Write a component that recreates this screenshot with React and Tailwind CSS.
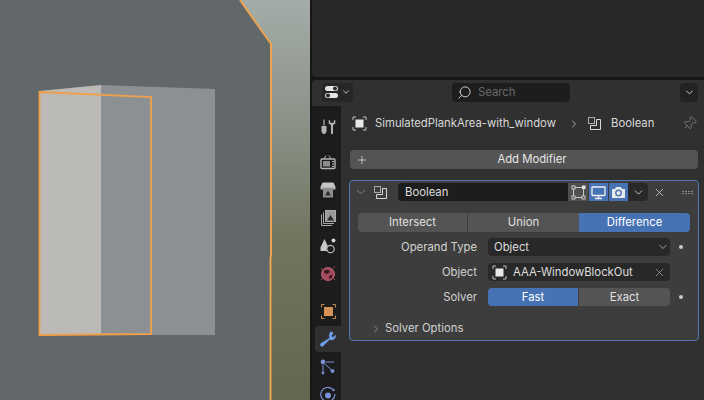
import React from "react";
import { ChevronDown, ChevronRight, Pin, Search, X, Plus } from "lucide-react";

const ObjectIcon = ({ fill = "#e8e8e8", line = "#c4c4c4" }) => (
  <svg width="15" height="15" viewBox="0 0 15 15" fill="none">
    <path d="M1 4V1H4M11 1H14V4M14 11V14H11M4 14H1V11" stroke={line} strokeWidth="1" />
    <rect x="3.5" y="3.5" width="8" height="8" fill={fill} />
  </svg>
);

const ModifierIcon = () => (
  <svg width="15" height="15" viewBox="0 0 15 15" fill="none" stroke="#d8d8d8" strokeWidth="1">
    <rect x="1.5" y="1.5" width="6" height="6" stroke="#aaaaaa" />
    <path d="M9.5 3.5H13.5V13.5H3.5V9.5H9.5Z" />
  </svg>
);

const EditorIcon = () => (
  <svg width="16" height="14" viewBox="0 0 16 14">
    <rect x="1" y="1" width="13" height="5" rx="2.5" fill="#e4e4e4" />
    <circle cx="11" cy="3.5" r="2" fill="#2b2b2b" />
    <rect x="1" y="8" width="13" height="5" rx="2.5" fill="#e4e4e4" />
    <circle cx="4" cy="10.5" r="2" fill="#2b2b2b" />
  </svg>
);

const ToolIcon = () => (
  <svg width="16" height="16" viewBox="0 0 16 16" fill="#b4b4b4">
    <rect x="3.4" y="0.5" width="1.2" height="6" />
    <path d="M1.5 7H6.5V12.5L5 15H3L1.5 12.5Z" />
    <path d="M8.7 1V4.5L11 6V14.2A1 1 0 0 0 13 14.2V6L15.3 4.5V1L13.8 1.6V3.8H10.2V1.6Z" />
  </svg>
);

const RenderIcon = () => (
  <svg width="16" height="16" viewBox="0 0 16 16" fill="none" stroke="#b4b4b4" strokeWidth="1.4">
    <rect x="1" y="5" width="14" height="9.5" rx="1" />
    <path d="M4 5L6 1.5M11 5L9 1.5" strokeWidth="1" />
    <rect x="3" y="7" width="7" height="5.5" fill="#8c8c8c" stroke="none" />
    <path d="M12 7.5H14M12 10H14M12 12.5H14" strokeWidth="1" />
  </svg>
);

const OutputIcon = () => (
  <svg width="16" height="16" viewBox="0 0 16 16">
    <path d="M2.5 0.5H13.5L15.5 5H0.5Z" fill="#c4c4c4" />
    <rect x="0.5" y="5" width="15" height="2.5" fill="#b4b4b4" />
    <rect x="3" y="6" width="10" height="9.5" fill="#8e8e8e" />
    <path d="M5 13.5L8 8.5L11 13.5Z" fill="#303030" />
  </svg>
);

const ViewLayerIcon = () => (
  <svg width="16" height="16" viewBox="0 0 16 16" fill="none" stroke="#a8a8a8">
    <path d="M1.5 4.5V15.5H12" />
    <path d="M3.5 2.5V13.5H14" />
    <rect x="5.5" y="0.5" width="10" height="11" fill="#9a9a9a" />
    <path d="M7 10.5L10.5 5L14 10.5Z" fill="#2a2a2a" stroke="none" />
  </svg>
);

const SceneIcon = () => (
  <svg width="16" height="16" viewBox="0 0 16 16">
    <path d="M4.5 1L8.5 9.5V13H0.5V9.5Z" fill="#c8c8c8" />
    <circle cx="13.5" cy="2.5" r="2" fill="#d4d4d4" />
    <circle cx="10.5" cy="11" r="3.7" fill="#1c1c1c" stroke="#b8b8b8" strokeWidth="1.2" />
  </svg>
);

const WorldIcon = () => (
  <svg width="18" height="18" viewBox="0 0 18 18">
    <circle cx="9" cy="9" r="6.5" fill="#a34a5c" stroke="#b85e72" />
    <path d="M5 5.5L9 4.5L11 7L8 9L5.5 8ZM10 11L13.5 9.5L12.5 13.5L10.5 14Z" fill="#331a20" />
    <path d="M2 3L4 5M14 13L16 15M14 3.5L16 1.5M2 15L4 13" stroke="#9c4a5a" strokeWidth="1" />
  </svg>
);

const ObjectTabIcon = () => (
  <svg width="15" height="15" viewBox="0 0 15 15" fill="none">
    <path d="M0.5 3.5V0.5H3.5M11.5 0.5H14.5V3.5M14.5 11.5V14.5H11.5M3.5 14.5H0.5V11.5" stroke="#c28a52" />
    <rect x="3" y="3" width="9" height="9" fill="#d39253" />
  </svg>
);

const WrenchIcon = () => (
  <svg width="16" height="16" viewBox="0 0 16 16" fill="#6d9fea">
    <path d="M10.5 0.5L9.5 2.5C8.7 4.3 9 6 9.5 7L0.8 12.3C-0.2 13 0 14.2 0.7 15C1.4 15.8 2.6 15.9 3.3 15.1L9.5 8.8C11.5 9.6 14 9 15.2 7C15.8 6 16 4.8 15.8 3.8L13.5 5.8C12.6 6.2 11.6 5.5 11.8 4.4L13.6 1.9C12.6 1.1 11.5 0.7 10.5 0.5Z" />
  </svg>
);

const ParticlesIcon = () => (
  <svg width="16" height="16" viewBox="0 0 16 16" fill="#7b8fd8" stroke="#7b8fd8">
    <circle cx="3" cy="3" r="2.4" stroke="none" />
    <circle cx="12.5" cy="12" r="2" stroke="none" />
    <circle cx="3" cy="14" r="1.4" stroke="none" />
    <path d="M6 3H14M3 6V12.5M5 5L11 10.5" fill="none" strokeWidth="1" />
  </svg>
);

const PhysicsIcon = () => (
  <svg width="18" height="18" viewBox="0 0 18 18" fill="none" stroke="#7b8fd8" strokeWidth="1.2">
    <path d="M13.5 3.2A7 7 0 1 0 15.8 8" />
    <circle cx="9" cy="9.5" r="3" fill="#7b8fd8" stroke="none" />
    <circle cx="14.5" cy="4" r="1.2" fill="#7b8fd8" stroke="none" />
  </svg>
);

const EditModeIcon = () => (
  <svg width="15" height="15" viewBox="0 0 15 15" fill="none" stroke="#c8c8c8">
    <path d="M3 2.5H11M2.5 3V12M12.5 4V12M3 12.5H12" />
    <rect x="1" y="1" width="3" height="3" fill="#4f4f4f" />
    <rect x="11" y="0.5" width="3.5" height="3.5" fill="#e4e4e4" stroke="none" />
    <rect x="1" y="11" width="3" height="3" fill="#4f4f4f" />
    <rect x="11" y="11" width="3" height="3" fill="#4f4f4f" />
  </svg>
);

const MonitorIcon = () => (
  <svg width="15" height="15" viewBox="0 0 15 15" fill="none" stroke="#f0f0f0" strokeWidth="1.3">
    <rect x="1" y="2" width="13" height="8.5" rx="0.5" />
    <path d="M7.5 10.5V13M4 13.5H11" />
  </svg>
);

const CameraIcon = () => (
  <svg width="15" height="15" viewBox="0 0 15 15" fill="none">
    <path d="M1 4H4L5 2H10L11 4H14V13H1Z" fill="#e8e8e8" />
    <circle cx="7.5" cy="8" r="3.4" fill="#4772b3" />
    <circle cx="7.5" cy="8" r="2" fill="#e8e8e8" />
  </svg>
);

const Grip = () => (
  <div className="grid grid-cols-4 gap-[1px]">
    {Array.from({ length: 8 }).map((_, i) => (
      <span key={i} className="w-[2px] h-[1px] bg-[#8a8a8a]" />
    ))}
  </div>
);

const Tab = ({ children, active, className = "" }) => (
  <div className={`h-[28px] w-[26px] shrink-0 flex items-center ${className}`}>
    <div
      className={`h-[26px] w-[26px] flex items-center justify-center ${
        active ? "rounded-l-[4px] bg-[#303030]" : ""
      }`}
    >
      {children}
    </div>
  </div>
);

const PropRow = ({ label, children, dot }) => (
  <div className="flex items-center h-[18px]">
    <span className="w-[130px] pr-[11px] pt-[2px] text-right text-[#d2d2d2]">{label}</span>
    <div className="w-[182px]">{children}</div>
    {dot && <span className="ml-[9px] w-[4px] h-[4px] rounded-full bg-[#c8c8c8]" />}
  </div>
);

// 3D viewport is a drawing, not layout
const Viewport = () => (
  <svg width="310" height="400" viewBox="0 0 310 400" className="shrink-0 block">
    <defs>
      <linearGradient id="sky" x1="0" y1="0" x2="0" y2="1">
        <stop offset="0" stopColor="#a3aca8" />
        <stop offset="0.3" stopColor="#8c9288" />
        <stop offset="0.6" stopColor="#70755f" />
        <stop offset="1" stopColor="#636650" />
      </linearGradient>
    </defs>
    <rect width="310" height="400" fill="url(#sky)" />
    <path d="M0 0H240L271 44V400H0Z" fill="#62676a" />
    <path d="M101 85L215 89V335H101Z" fill="#8c9092" />
    <path d="M39 91L101 85V335H39Z" fill="#bcbab6" />
    <path d="M240 0L271 44V255L270.5 258V400" fill="none" stroke="#eca44e" strokeWidth="2" />
    <path d="M39.5 92L151 97V334L39.5 335Z" fill="none" stroke="#f0a04a" strokeWidth="1.8" />
  </svg>
);

export default function App() {
  return (
    <div
      className="w-[704px] h-[400px] flex overflow-hidden bg-[#161616] text-[11.3px] leading-none text-[#d2d2d2]"
      style={{ fontFamily: "Inter, sans-serif" }}
    >
      <Viewport />
      <div className="flex-1 min-w-0 flex flex-col pl-[2px]">
        {/* Outliner stub */}
        <div className="h-[77px] bg-[#282828] rounded-bl-[4px] shrink-0" />

        {/* Properties editor */}
        <div className="mt-[3px] flex-1 min-h-0 flex flex-col rounded-tl-[4px] overflow-hidden">
          <div className="h-[26px] shrink-0 bg-[#303030] flex items-center pl-[10px] pr-[6px] pb-[2px]">
            <div className="w-[31px] h-[19px] rounded-[4px] bg-[#262626] flex items-center justify-center gap-[1px]">
              <EditorIcon />
              <ChevronDown size={10} strokeWidth={2} className="text-[#d8d8d8]" />
            </div>
            <div className="ml-[99px] w-[118px] h-[19px] rounded-[4px] bg-[#1d1d1d] flex items-center pl-[5px] gap-[6px] text-[#6a6a6a]">
              <Search size={15} strokeWidth={1.5} className="text-[#d8d8d8] -scale-x-100" />
              <span className="pt-[2px]">Search</span>
            </div>
            <div className="ml-auto w-[18px] h-[19px] rounded-[4px] bg-[#232323] flex items-center justify-center">
              <ChevronDown size={11} strokeWidth={2} className="text-[#d8d8d8]" />
            </div>
          </div>

          <div className="flex-1 min-h-0 flex">
            {/* Tab column */}
            <div className="w-[29px] shrink-0 bg-[#1c1c1c] flex flex-col pt-[7px] pl-[3px] text-[#b4b4b4]">
              <Tab className="mb-[7px]"><ToolIcon /></Tab>
              <Tab><RenderIcon /></Tab>
              <Tab><OutputIcon /></Tab>
              <Tab><ViewLayerIcon /></Tab>
              <Tab><SceneIcon /></Tab>
              <Tab className="mb-[9px]"><WorldIcon /></Tab>
              <Tab><ObjectTabIcon /></Tab>
              <Tab active><WrenchIcon /></Tab>
              <Tab><ParticlesIcon /></Tab>
              <Tab><PhysicsIcon /></Tab>
            </div>

            {/* Main content */}
            <div className="flex-1 min-w-0 bg-[#303030] pl-[8px] pr-[5px]">
              <div className="h-[17px] mt-[9px] flex items-center text-[#d8d8d8]">
                <span className="ml-[3px] w-[23px]"><ObjectIcon /></span>
                <span className="w-[193px] whitespace-nowrap">SimulatedPlankArea-with_window</span>
                <ChevronRight size={12} strokeWidth={1.6} className="text-[#c8c8c8]" />
                <span className="ml-[7px] w-[24px]"><ModifierIcon /></span>
                <span>Boolean</span>
                <Pin size={15} strokeWidth={1.2} className="ml-auto mr-[2px] rotate-45 text-[#8c8c8c]" />
              </div>

              <div className="mt-[18px] mx-[1px] h-[19px] rounded-[4px] bg-[#545454] flex items-center px-[6px] text-[#e6e6e6]">
                <Plus size={12} strokeWidth={1.5} />
                <span className="flex-1 text-center pl-[4px]">Add Modifier</span>
              </div>

              {/* Modifier panel */}
              <div className="mt-[11px] h-[161px] rounded-[4px] border border-[#4f78b4] bg-[#3d3d3d] pt-[2px] px-[8px]">
                <div className="h-[18px] flex items-center">
                  <ChevronDown size={14} strokeWidth={1.5} className="ml-[-4px] text-[#8e8e8e]" />
                  <span className="ml-[5px] w-[15px]"><ModifierIcon /></span>
                  <div className="ml-[10px] w-[170px] h-[18px] pt-[2px] rounded-l-[4px] bg-[#1d1d1d] flex items-center pl-[7px] text-[#dedede]">Boolean</div>
                  <div className="w-[20px] h-[18px] bg-[#4f4f4f] flex items-center justify-center"><EditModeIcon /></div>
                  <div className="ml-[1px] w-[19px] h-[18px] bg-[#4772b3] flex items-center justify-center"><MonitorIcon /></div>
                  <div className="ml-[1px] w-[19px] h-[18px] bg-[#4772b3] flex items-center justify-center"><CameraIcon /></div>
                  <div className="w-[20px] h-[18px] rounded-r-[4px] bg-[#282828] flex items-center justify-center">
                    <ChevronDown size={13} strokeWidth={1.6} className="text-[#d8d8d8]" />
                  </div>
                  <X size={13} strokeWidth={1.4} className="ml-[5px] text-[#d8d8d8]" />
                  <div className="ml-auto mr-[-3px]"><Grip /></div>
                </div>

                <div className="mt-[12px] h-[19px] flex text-center leading-[19px]">
                  <div className="w-[109px] rounded-l-[4px] bg-[#545454] text-[#e0e0e0]">Intersect</div>
                  <div className="w-[111px] ml-[1px] bg-[#545454] text-[#e0e0e0]">Union</div>
                  <div className="flex-1 rounded-r-[4px] bg-[#4772b3] text-white">Difference</div>
                </div>

                <div className="mt-[6px] flex flex-col gap-[7px]">
                  <PropRow label="Operand Type" dot>
                    <div className="h-[18px] rounded-[4px] bg-[#282828] flex items-center pl-[6px] pr-[1px] justify-between text-[#dedede]">
                      <span className="pt-[2px]">Object</span>
                      <ChevronDown size={12} strokeWidth={1.6} className="text-[#c8c8c8]" />
                    </div>
                  </PropRow>
                  <PropRow label="Object">
                    <div className="h-[18px] rounded-[4px] bg-[#282828] flex items-center pl-[4px] pr-[4px] text-[#dedede]">
                      <ObjectIcon />
                      <span className="ml-[6px] pt-[2px] flex-1">AAA-WindowBlockOut</span>
                      <X size={13} strokeWidth={1.2} className="text-[#b8b8b8]" />
                    </div>
                  </PropRow>
                  <PropRow label="Solver" dot>
                    <div className="h-[18px] flex text-center leading-[18px]">
                      <div className="w-[90px] rounded-l-[4px] bg-[#4772b3] text-white">Fast</div>
                      <div className="flex-1 ml-[1px] rounded-r-[4px] bg-[#545454] text-[#e0e0e0]">Exact</div>
                    </div>
                  </PropRow>
                </div>

                <div className="mt-[17px] ml-[12px] flex items-center gap-[3px] text-[#d2d2d2]">
                  <ChevronRight size={12} strokeWidth={1.5} className="text-[#a0a0a0]" />
                  Solver Options
                </div>
              </div>
            </div>
          </div>
        </div>
      </div>
    </div>
  );
}
